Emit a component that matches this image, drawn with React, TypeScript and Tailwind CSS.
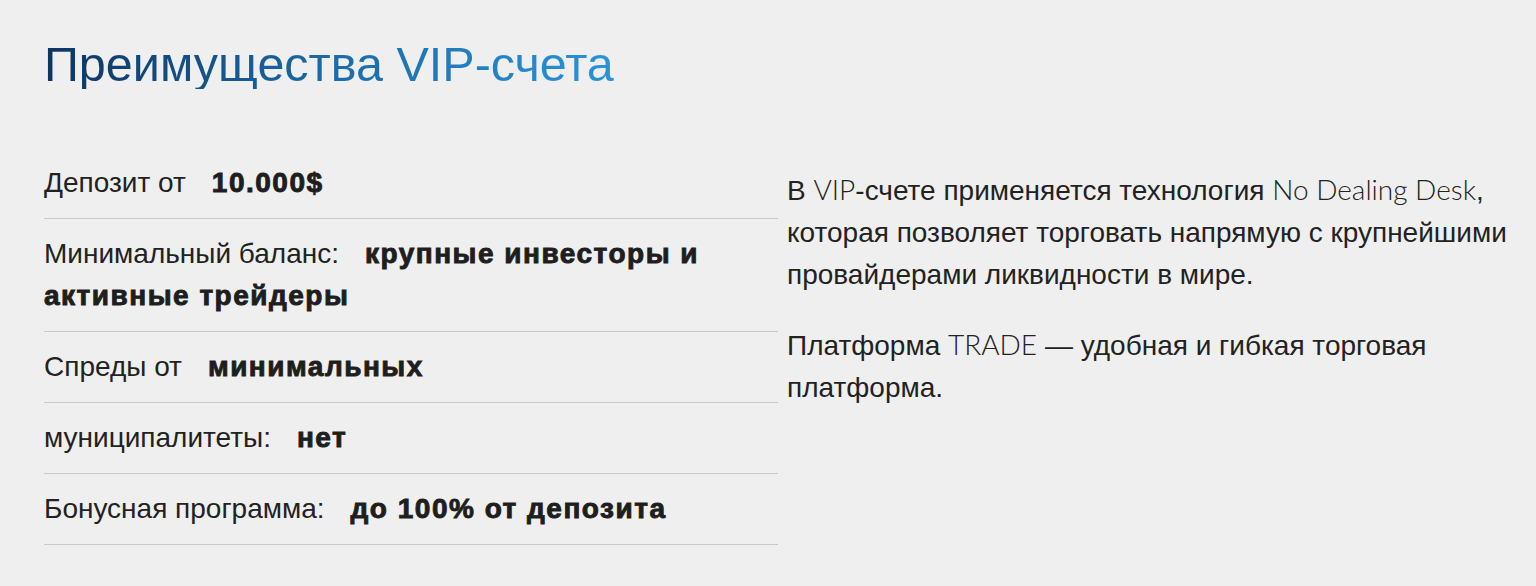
const ROWS: { label: string; value: string }[] = [
  { label: 'Депозит от', value: '10.000$' },
  { label: 'Минимальный баланс:', value: 'крупные инвесторы и активные трейдеры' },
  { label: 'Спреды от', value: 'минимальных' },
  { label: 'муниципалитеты:', value: 'нет' },
  { label: 'Бонусная программа:', value: 'до 100% от депозита' },
];

const latin = 'font-["Lato",sans-serif] font-light leading-none';

export default function App() {
  return (
    <div className='min-h-[586px] bg-[#efefef] pl-[44px] pr-[20px] pt-[40px] font-["Liberation_Sans",Arial,sans-serif] text-[#222]'>
      {/* Title */}
      <h1 className="inline-block bg-linear-to-r from-[#0b3562] via-[#1c6aa8] to-[#2a93da] bg-clip-text text-[48.5px] leading-none text-transparent">
        Преимущества VIP-счета
      </h1>

      <div className="mt-[59px] flex">
        {/* Conditions list */}
        <div className="w-[734px] shrink-0">
          {ROWS.map(r => (
            <p key={r.label} className="border-b border-[#c9c9c9] py-[14px] text-[28px] leading-[42px]">
              <span className="mr-[26px]">{r.label}</span>
              <span className="font-bold tracking-[1.5px] text-[#1e1e1e] [-webkit-text-stroke:0.9px_#1e1e1e]">
                {r.value}
              </span>
            </p>
          ))}
        </div>

        {/* Description */}
        <div className="ml-[9px] flex-1 pt-[22px] text-[28px] leading-[42px]">
          <p className="mb-[29px]">
            В <span className={latin}>VIP</span>-счете применяется технология{' '}
            <span className={latin}>No Dealing Desk</span>, которая позволяет торговать напрямую с крупнейшими
            провайдерами ликвидности в мире.
          </p>
          <p>
            Платформа <span className={latin}>TRADE</span> — удобная и гибкая торговая платформа.
          </p>
        </div>
      </div>
    </div>
  );
}
